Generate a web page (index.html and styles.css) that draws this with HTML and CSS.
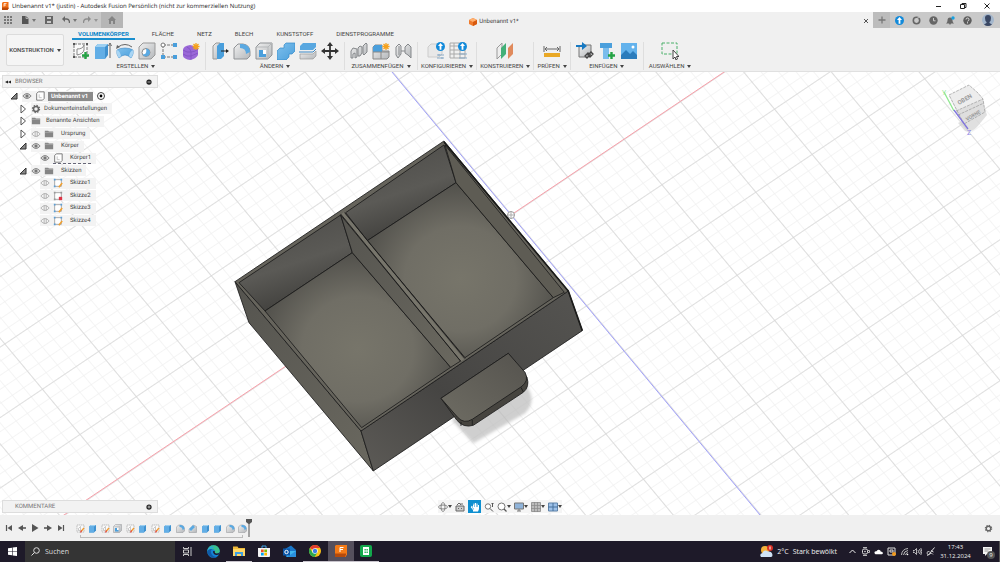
FILE: index.html
```html
<!DOCTYPE html>
<html lang="de">
<head>
<meta charset="utf-8">
<title>Unbenannt v1* - Autodesk Fusion</title>
<link rel="stylesheet" href="styles.css">
</head>
<body>
<svg class="defs" aria-hidden="true">
  <defs>
    <linearGradient id="blue" x1="0" y1="0" x2="1" y2="1"><stop offset="0" stop-color="#7fc0ec"/><stop offset="1" stop-color="#4a9fdc"/></linearGradient>
    <linearGradient id="steel" x1="0" y1="0" x2="1" y2="1"><stop offset="0" stop-color="#f0f0f0"/><stop offset="1" stop-color="#b4b7ba"/></linearGradient>
    <symbol id="box" viewBox="0 0 18 18"><path d="M2 5l4-3h10v11l-4 4H2z" fill="#3f91cf"/><path d="M2 5l4-3h10l-4 3z" fill="#9dd0f2"/><path d="M2 5h10v12H2z" fill="#62aee6"/></symbol>
    <symbol id="sketch" viewBox="0 0 18 18"><path d="M2 2h14v14H2z" fill="#fafafa" stroke="#8a8a8a" stroke-dasharray="3 1"/><path d="M5 13h4V5M5 13V9l4-4" fill="none" stroke="#999"/><path d="M16 8l-6 7" stroke="#f39c2e" stroke-width="2.6"/><path d="M11 13l-2 4" stroke="#e04040" stroke-width="2.4"/></symbol>
    <symbol id="fillet" viewBox="0 0 18 18"><path d="M1 17V6l4-4h5q7 1 7 8v4l-3 3z" fill="url(#steel)" stroke="#909396"/><path d="M7 2h3q7 1 7 8l-4 2q0-6-6-6z" fill="#5aa9e2"/></symbol>
    <symbol id="shell" viewBox="0 0 18 18"><path d="M1 5l4-4h12v12l-4 4H1z" fill="url(#steel)" stroke="#909396"/><path d="M1 5h12v12M13 5l4-4" fill="none" stroke="#b5b8ba"/><path d="M4 8h4v4h3v3H4z" fill="#4a9fdc"/><path d="M8 8h3v4H8z" fill="#fff"/></symbol>
    <symbol id="chamfer" viewBox="0 0 18 18"><path d="M2 17v-6l9-9 6 3v12z" fill="url(#steel)" stroke="#909396"/><path d="M2 10l8-8 4 4-8 8z" fill="#5aa9e2"/></symbol>
    <symbol id="eye" viewBox="0 0 12 10"><path d="M1 5q5-6 10 0-5 6-10 0z" fill="#d4d4d4" stroke="#888" stroke-width="1.2"/><circle cx="6" cy="5" r="1.9" fill="#777"/></symbol>
    <symbol id="eye-off" viewBox="0 0 12 10"><path d="M1 5q5-6 10 0-5 6-10 0zM5 2v6M7.500 2v6" fill="none" stroke="#aaa"/></symbol>
    <symbol id="folder" viewBox="0 0 12 10"><path d="M1 1h4l1 1h5v7H1z" fill="#858585"/><path d="M1 3h10" stroke="#b5b5b5" stroke-width=".8"/></symbol>
    <symbol id="closed" viewBox="0 0 10 10"><path d="M3 1l4.500 4L3 9z" fill="#fff" stroke="#555" stroke-width="1"/></symbol>
    <symbol id="open" viewBox="0 0 10 10"><path d="M2 8h6V2z" fill="#888" stroke="#333"/></symbol>
    <symbol id="body" viewBox="0 0 12 12"><path d="M2 3l2-2h7v8l-2 2H2z" fill="#fff" stroke="#666"/><path d="M5 4v4h3" fill="none" stroke="#bbb"/></symbol>
    <symbol id="sk" viewBox="0 0 12 12"><path d="M2 2h8v8H2z" fill="#fff" stroke="#999"/><path d="M1 1h2v2H1zM9 1h2v2H9zM1 9h2v2H1z" fill="#5a9fd8"/><path d="M11 6l-4 5" stroke="#f0a030" stroke-width="1.800"/></symbol>
    <symbol id="sk-lock" viewBox="0 0 12 12"><path d="M2 2h8v8H2z" fill="#fff" stroke="#999"/><path d="M1 1h2v2H1zM9 1h2v2H9zM1 9h2v2H1z" fill="#999"/><path d="M7 7h4v4H7z" fill="#dc3545"/></symbol>
    <symbol id="gear" viewBox="0 0 12 12"><circle cx="6" cy="6" r="3" fill="none" stroke="#666" stroke-width="1.800"/><circle cx="6" cy="6" r="4.300" fill="none" stroke="#666" stroke-width="1.400" stroke-dasharray="1.690 1.690"/></symbol>
    <symbol id="bolt" viewBox="0 0 10 10"><circle cx="5" cy="5" r="5" fill="#128ada"/><path d="M5 1L2.200 4.500H4V8.500h2v-4h1.800z" fill="#fff"/></symbol>
    <symbol id="min" viewBox="0 0 8 8"><circle cx="4" cy="4" r="3.500" fill="#222"/><path d="M2 4h4" stroke="#ddd"/></symbol>
    <symbol id="plus" viewBox="0 0 8 8"><circle cx="4" cy="4" r="3.500" fill="#222"/><path d="M2 4h4M4 2v4" stroke="#ddd"/></symbol>
    <symbol id="back" viewBox="0 0 8 8"><path d="M4 2v4L0 4zM8 2v4L4 4z" fill="#222"/></symbol>
  </defs>
</svg>

<header class="titlebar">
  <svg class="i8" viewBox="0 0 16 16"><path d="M2 2l2-2h11v13l-2 3H2z" fill="#f26f16"/><path d="M2 11h13v2l-2 3H2z" fill="#b94708"/><path d="M6 9V3h5M6 6h4" fill="none" stroke="#fff" stroke-width="1.500"/></svg>
  <span class="grow">Unbenannt v1* (justin) - Autodesk Fusion Persönlich (nicht zur kommerziellen Nutzung)</span>
  <button aria-label="Minimieren"><svg class="i8" viewBox="0 0 8 8"><path d="M1 4.500h5" stroke="#222"/></svg></button>
  <button aria-label="Wiederherstellen"><svg class="i8" viewBox="0 0 8 8"><path d="M1.500 2.500h4v4h-4zM3 2.500v-1h4v4H6" fill="none" stroke="#222"/></svg></button>
  <button aria-label="Schließen"><svg class="i8" viewBox="0 0 8 8"><path d="M1.500 1.500l5 5M6.500 1.500l-5 5" stroke="#222"/></svg></button>
</header>

<div class="docbar">
  <div class="quick">
    <button aria-label="Datenbereich"><svg class="i8" viewBox="0 0 8 8"><path d="M0 0h2v2H0zM3 0h2v2H3zM6 0h2v2H6zM0 3h2v2H0zM3 3h2v2H3zM6 3h2v2H6zM0 6h2v2H0zM3 6h2v2H3zM6 6h2v2H6z" fill="#777"/></svg></button>
    <button class="dd" aria-label="Datei"><svg class="i8" viewBox="0 0 8 8"><path d="M1 0h4l2.500 2.500V8H1z" fill="#555"/><path d="M5 0v2.500h2.500" fill="none" stroke="#ccc" stroke-width=".7"/></svg></button>
    <button aria-label="Speichern"><svg class="i8" viewBox="0 0 8 8"><path d="M0 0h8v8H0z" fill="#666"/><path d="M2 1h4v2H2zM2 5h4v2H2z" fill="#c9c9c9"/></svg></button>
    <button class="dd" aria-label="Rückgängig"><svg class="i8" viewBox="0 0 8 8"><path d="M1 3h3.500q3 0 3 4" fill="none" stroke="#666" stroke-width="1.300"/><path d="M0 3l3-3v6z" fill="#666"/></svg></button>
    <button class="dd faint" aria-label="Wiederholen"><svg class="i8" viewBox="0 0 8 8"><path d="M7 3H3.500q-3 0-3 4" fill="none" stroke="#666" stroke-width="1.300"/><path d="M8 3L5 0v6z" fill="#666"/></svg></button>
  </div>
  <button class="home" aria-label="Startseite"><svg class="i8" viewBox="0 0 8 8"><path d="M0 4l4-4 4 4H7v4H5V5H3v3H1V4z" fill="#848484"/></svg></button>
  <div class="doctab"><svg class="i8" viewBox="0 0 8 8"><path d="M4 0l4 2v4L4 8 0 6V2z" fill="#f07b2c"/><path d="M4 0l4 2-4 2-4-2z" fill="#ffb070"/><path d="M4 4l4-2v4L4 8z" fill="#d8590e"/></svg><span>Unbenannt v1*</span></div>
  <button class="closetab" aria-label="Tab schließen"><svg class="i8" viewBox="0 0 8 8"><path d="M2 2l4 4M6 2L2 6" stroke="#555"/></svg></button>
  <div class="account">
    <button class="newtab" aria-label="Neuer Tab"><svg class="i8" viewBox="0 0 8 8"><path d="M4 .5v7M.5 4h7" stroke="#777" stroke-width="1.300"/></svg></button>
    <button aria-label="Erweiterungen"><svg class="i9"><use href="#bolt"/></svg></button>
    <button aria-label="Aktualisieren"><svg class="i9" viewBox="0 0 9 9"><circle cx="4.500" cy="4.500" r="3.200" fill="none" stroke="#666" stroke-width="1.600"/><path d="M4.500 4.500V2.500L8 1" stroke="#ccc" stroke-width=".8" fill="none"/></svg></button>
    <button aria-label="Auftragsstatus"><svg class="i9" viewBox="0 0 9 9"><circle cx="4.500" cy="4.500" r="4.200" fill="#666"/><path d="M4.500 2v2.800h2" stroke="#ccc" fill="none"/></svg></button>
    <button aria-label="Benachrichtigungen"><svg class="i9" viewBox="0 0 9 9"><path d="M0 7.500q1.500-1 1.500-3 0-3 2.500-3t2.500 3q0 2 1.500 3H5L4 9 3 7.500z" fill="#666"/><circle cx="7" cy="2" r="1.700" fill="#16a0e0"/></svg></button>
    <button aria-label="Hilfe"><svg class="i9" viewBox="0 0 9 9"><circle cx="4.500" cy="4.500" r="4.200" fill="#5c5c5c"/><path d="M3 3.500q0-1.500 1.500-1.500T6 3.400 4.500 5.300M4.500 6.200v1.200" stroke="#ddd" fill="none"/></svg></button>
    <button class="profile" aria-label="Profil"><svg class="i12" viewBox="0 0 12 12"><circle cx="6" cy="6" r="6" fill="#a3b6cc"/><path d="M3 4q0-3 3-3t3 3-1.500 4v1l2.500 1.500Q8 12 6 12T2 10.500L4.500 9V8Q3 7 3 4z" fill="#3a4763"/></svg></button>
  </div>
</div>

<div class="ribbon">
  <button class="workspace dd">KONSTRUKTION</button>
  <div class="tools">
    <nav class="tabs">
      <button class="on">VOLUMENKÖRPER</button><button>FLÄCHE</button><button>NETZ</button><button>BLECH</button><button>KUNSTSTOFF</button><button>DIENSTPROGRAMME</button>
    </nav>
    <div class="groups">
      <section>
        <div class="icons">
          <button aria-label="Skizze erstellen"><svg viewBox="0 0 18 18"><path d="M2 2h13v13H2z" fill="#fafafa" stroke="#777" stroke-dasharray="3 1"/><path d="M5 13V7q6 0 7-4v5q-1 4-7 5z" fill="none" stroke="#888"/><path d="M1 1h2v2H1zM14 1h2v2h-2zM1 14h2v2H1z" fill="#555"/><path d="M13.500 10v7M10 13.500h7" stroke="#25a345" stroke-width="2.400"/></svg></button>
          <button aria-label="Extrusion"><svg viewBox="0 0 18 18"><path d="M1 5l3-3h10v11l-3 4H1z" fill="#3f91cf"/><path d="M1 5l3-3h10l-3 3z" fill="#9dd0f2"/><path d="M1 5h10v12H1z" fill="#62aee6"/><path d="M16 16V3M14.500 4L16 1l1.500 3" fill="none" stroke="#555" stroke-width=".9"/></svg></button>
          <button aria-label="Drehen"><svg viewBox="0 0 18 18"><path d="M1 8q3-2 8-2t8 2q1 4-2 8-3-3-6-3t-6 3q-3-4-2-8z" fill="url(#blue)" stroke="#3a87c4" stroke-width=".6"/><path d="M2 5q7-5 14 0" fill="none" stroke="#666"/><path d="M0 7l1-4 3 2z" fill="#666"/><path d="M1 8q3 1 4 6l-2 2q-3-4-2-8zM17 8q-3 1-4 6l2 2q3-4 2-8z" fill="#a8d5f4"/></svg></button>
          <button aria-label="Bohrung"><svg viewBox="0 0 18 18"><path d="M1 5l4-4h12v12l-4 4H1z" fill="url(#steel)" stroke="#999"/><circle cx="8" cy="10.500" r="4" fill="#fff" stroke="#888"/><path d="M8 6.500a4 4 0 1 1-3.500 6q5 0 3.500-6z" fill="#5aa9e2"/></svg></button>
          <button aria-label="Muster"><svg viewBox="0 0 18 18"><path d="M3 3h12M3 3v12h12" fill="none" stroke="#777" stroke-dasharray="3 1"/><circle cx="3" cy="3" r="2" fill="#fff" stroke="#777"/><path d="M13 1h4v4h-4zM1 13h4v4H1zM13 13h4v4h-4z" fill="#4a9fdc"/></svg></button>
          <button aria-label="Form erstellen"><svg viewBox="0 0 18 18"><path d="M1 8q0-4 7-5 7 1 8 4v6q-2 4-8 5-6-1-7-4z" fill="#9a68d8"/><path d="M1 8q4 3 8 2 4 0 7-3M9 10v8M1 12q4 3 8 2l7-3M5 5q4 2 4 5" fill="none" stroke="#7d4fbd" stroke-width=".7"/><path d="M14 1v7M10.500 4.500h7M11.500 2l5 5M16.500 2l-5 5" stroke="#f5a11c" stroke-width="1.300"/></svg></button>
        </div>
        <button class="label dd">ERSTELLEN</button>
      </section>
      <section>
        <div class="icons">
          <button aria-label="Drücken/Ziehen"><svg viewBox="0 0 18 18"><path d="M2 4l3-3h4v13l-3 3H2z" fill="url(#steel)" stroke="#999"/><path d="M6 4l3-3h4v13l-3 3H6z" fill="#4a9fdc"/><path d="M10 9h6" stroke="#222"/><path d="M15 7l3 2-3 2z" fill="#222"/></svg></button>
          <button aria-label="Abrundung"><svg><use href="#fillet"/></svg></button>
          <button aria-label="Wandung"><svg><use href="#shell"/></svg></button>
          <button aria-label="Kombinieren"><svg viewBox="0 0 18 18"><path d="M7 3l2-2h9v8l-3 3h-3v3l-3 3H0V9l3-3h4z" fill="url(#blue)" stroke="#3489c9" stroke-width=".7"/></svg></button>
          <button aria-label="Körper trennen"><svg viewBox="0 0 18 18"><path d="M1 4l3-3h13v4l-3 3H1z" fill="#58a7e0"/><path d="M0 10h14l3-3" fill="none" stroke="#3a87c4"/><path d="M1 12h13l3-3v5l-3 3H1z" fill="url(#steel)" stroke="#999" stroke-width=".7"/></svg></button>
          <button aria-label="Verschieben"><svg viewBox="0 0 18 18"><path d="M9 3v12M3 9h12" stroke="#333" stroke-width="1.800"/><path d="M9 0l3 4H6zM9 18l3-4H6zM0 9l4-3v6zM18 9l-4-3v6z" fill="#333"/></svg></button>
        </div>
        <button class="label dd">ÄNDERN</button>
      </section>
      <section>
        <div class="icons">
          <button aria-label="Verbindung"><svg viewBox="0 0 18 18"><path d="M1 16V9l2-3 4 1v8l-2 1v-5l-2 1v4zM8 14V6l2-2 2 1v6l-2 3zM13 12V4l3-3 1 1v8l-3 3z" fill="url(#steel)" stroke="#85888b"/></svg></button>
          <button aria-label="Neue Komponente"><svg viewBox="0 0 18 18"><path d="M1 5l2-2h7v6h7v6l-2 2H1z" fill="url(#steel)" stroke="#888"/><path d="M1 5l2-2h7v7H1z" fill="#4a9fdc"/><path d="M9 10v7M1 10h16" stroke="#888"/><path d="M14 1v7M10.500 4.500h7M11.500 2l5 5M16.500 2l-5 5" stroke="#f5a11c" stroke-width="1.300"/></svg></button>
          <button aria-label="Starre Gruppe"><svg viewBox="0 0 18 18"><path d="M2 13V5l3-3 2 2v8l-3 4zM11 5l3-3 3 3v11l-3-3-3-2z" fill="url(#steel)" stroke="#85888b"/><path d="M5 4v9M7 9h4" stroke="#85888b"/></svg></button>
        </div>
        <button class="label dd">ZUSAMMENFÜGEN</button>
      </section>
      <section class="tight">
        <div class="icons">
          <button aria-label="Konfiguration"><svg viewBox="0 0 18 18"><path d="M1 5l3-3h11v10l-3 3H1z" fill="#e8e8e8" stroke="#ccc"/><path d="M10 13h7M10 16h7M12 12v2M15 15v2" stroke="#89a9c5"/><use href="#bolt" x="9" y="0" width="9" height="9"/></svg></button>
          <button aria-label="Konfigurationstabelle"><svg viewBox="0 0 18 18"><path d="M1 1h15v15H1zM1 4h15M1 8h15M1 12h15M5 1v15M11 4v12" fill="none" stroke="#aaa"/><path d="M10 12h8M10 16h8" stroke="#89a9c5"/><use href="#bolt" x="9" y="0" width="9" height="9"/></svg></button>
        </div>
        <button class="label dd">KONFIGURIEREN</button>
      </section>
      <section class="tight">
        <div class="icons"><button aria-label="Versatzebene"><svg viewBox="0 0 18 18"><path d="M1 6l5-5v11l-5 5z" fill="#eee" stroke="#999"/><path d="M5 6l5-5v11l-5 5z" fill="#43b078"/><path d="M12 6l5-5v11l-5 5z" fill="#e08a5c"/></svg></button></div>
        <button class="label dd">KONSTRUIEREN</button>
      </section>
      <section class="tight">
        <div class="icons"><button aria-label="Messen"><svg viewBox="0 0 18 18"><path d="M1 4v6M17 4v6M2 7h14M4 5L2 7l2 2M14 5l2 2-2 2" fill="none" stroke="#666"/><path d="M1 11h16v4H1z" fill="#e9a825"/></svg></button></div>
        <button class="label dd">PRÜFEN</button>
      </section>
      <section>
        <div class="icons">
          <button aria-label="Ableiten"><svg viewBox="0 0 18 18"><path d="M3 5l3-2h9v9l-3 3H3z" fill="url(#steel)" stroke="#777"/><path d="M0 4h7" stroke="#1779c2" stroke-width="2"/><path d="M6 0l5 4-5 4z" fill="#1779c2"/><path d="M9 14l3-3 2 2-3 3zM12 13l3-3 2 2-3 3z" fill="none" stroke="#444" stroke-width="1.300"/></svg></button>
          <button aria-label="Bauteil einfügen"><svg viewBox="0 0 18 18"><path d="M2 1h12v5H2z" fill="#4a9fdc"/><path d="M5 6h6v11H5z" fill="#7bbcec"/><path d="M13.500 10v7M10 13.500h7" stroke="#25a345" stroke-width="2.400"/></svg></button>
          <button aria-label="Bild"><svg viewBox="0 0 18 18"><path d="M1 1h16v16H1z" fill="#63b2ec"/><path d="M1 13l5-5 4 4 3-3 4 4v4H1z" fill="#2b7cbc"/><circle cx="13" cy="5" r="1.500" fill="#fff"/></svg></button>
        </div>
        <button class="label dd">EINFÜGEN</button>
      </section>
      <section class="last">
        <div class="icons"><button aria-label="Auswählen"><svg viewBox="0 0 18 18"><path d="M1 1h15v11H1z" fill="none" stroke="#4bb06a" stroke-dasharray="3 1.500"/><path d="M12 8v9l2-2 1 3 1.500-1-1-2.500H18z" fill="#fff" stroke="#444"/></svg></button></div>
        <button class="label dd">AUSWÄHLEN</button>
      </section>
    </div>
  </div>
</div>

<main class="viewport">
  <svg class="scene" viewBox="0 72 1000 443" preserveAspectRatio="xMidYMid slice" role="img" aria-label="3D-Ansicht">
    <defs>
      <pattern id="minor" width="20" height="20" patternUnits="userSpaceOnUse" patternTransform="matrix(.563 -.378 .376 .4525 511 215)"><path d="M0 .5H20M.5 0V20" stroke="#f1f1f1" stroke-width="1.400"/></pattern>
      <pattern id="major" width="100" height="100" patternUnits="userSpaceOnUse" patternTransform="matrix(.563 -.378 .376 .4525 511 215)"><path d="M0 .5H100M.5 0V100" stroke="#d6d6d6" stroke-width="1.400"/></pattern>
      <radialGradient id="floor" cx=".5" cy=".55" r=".6"><stop offset="0" stop-color="#77756a"/><stop offset=".5" stop-color="#706e65"/><stop offset="1" stop-color="#4b4a46"/></radialGradient>
      <linearGradient id="wall" x1="0" y1="0" x2=".4" y2="1"><stop offset="0" stop-color="#4a4946"/><stop offset=".6" stop-color="#5b5a56"/><stop offset="1" stop-color="#403f3c"/></linearGradient>
      <linearGradient id="front" x1="0" y1="1" x2="1" y2="0"><stop offset="0" stop-color="#5d5b57"/><stop offset=".4" stop-color="#464543"/><stop offset="1" stop-color="#555451"/></linearGradient>
      <linearGradient id="side" x1="0" y1="0" x2="1" y2="1"><stop offset="0" stop-color="#55544f"/><stop offset="1" stop-color="#6a685f"/></linearGradient>
      <linearGradient id="grip" x1="0" y1="1" x2="1" y2="0"><stop offset="0" stop-color="#6e6c63"/><stop offset="1" stop-color="#55534e"/></linearGradient>
      <filter id="soft"><feGaussianBlur stdDeviation="5"/></filter>
    </defs>
    <rect y="72" width="1000" height="443" fill="#fff"/>
    <rect y="72" width="1000" height="443" fill="url(#minor)"/>
    <rect y="72" width="1000" height="443" fill="url(#major)"/>
    <path d="M511 215L736 64M511 215L61 517" stroke="#f9a0aa"/>
    <path d="M511 215L387 66M511 215L765 521" stroke="#a0a0fb"/>
    <circle cx="511" cy="215" r="3.500" fill="#fff" stroke="#999"/><path d="M511 211v8M507 215h8" stroke="#aaa"/>
    <g transform="translate(225 130) scale(.3333)" stroke-linejoin="round" stroke="#1b1b1a" stroke-width="2.500">
      <path d="M680 870L745 940 900 850Q930 820 915 785L880 720z" fill="#bbb" opacity=".7" stroke="none" filter="url(#soft)"/>
      <path d="M30 455L408 903 445 1023 72 578z" fill="url(#side)"/>
      <path d="M408 903L1030 483 1072 602 445 1023z" fill="url(#front)"/>
      <path d="M30 455L657 33 1030 483 408 903z" fill="#66645c"/>
      <path d="M42 458L347 255 382 368 120 543z" fill="url(#wall)"/>
      <path d="M120 543L382 368 677 712 410 893z" fill="url(#floor)"/>
      <path d="M347 255L382 368 677 712 707 693z" fill="url(#side)"/>
      <path d="M362 248L657 45 693 158 427 332z" fill="url(#wall)"/>
      <path d="M427 332L693 158 985 503 720 683z" fill="url(#floor)"/>
      <path d="M660 45L693 158 985 503 1018 487z" fill="#5e5c54"/>
      <path d="M352 250L713 691" stroke="#77756b" stroke-width="10"/>
      <path d="M347 252L707 694M359 248L720 686" fill="none"/>
      <path d="M657 36L1030 483 1072 602" fill="none" stroke-width="5"/>
      <path d="M648 805L695 870Q715 895 745 886L895 787Q915 770 906 742L850 670z" fill="#46443f"/>
      <path d="M648 805L850 670 900 727Q914 753 888 771L742 868Q717 883 698 862z" fill="url(#grip)"/>
      <path d="M708 876v12M742 870v15M888 772l7 14" fill="none"/>
    </g>
    <g>
      <path d="M958 123l7 8q6 2 12-4l10-12-2-6z" fill="#ccc" opacity=".6"/>
      <path d="M949 95L969 85 978 93 983 99 956 111z" fill="#ededed"/>
      <path d="M956 111L983 99 985 112 964 124z" fill="#dedede"/>
      <path d="M949 95L969 85 978 93 983 99 985 112 964 124 949 95M956 111L983 99M958 115L984 103" fill="none" stroke="#999" stroke-width=".7" stroke-dasharray="3 1"/>
      <path d="M944 92l10 19" stroke="#8fe88f" stroke-width="1.300"/><path d="M954 110l14 19" stroke="#7f74dd" stroke-width="1.300"/>
      <text class="cube" transform="translate(959 105) rotate(-30)">OBEN</text>
      <text class="cube small" transform="translate(967 121) rotate(-30)">VORNE</text>
      <text class="axis y" x="942" y="95">Y</text><text class="axis z" x="967" y="135">Z</text>
    </g>
  </svg>

  <aside class="browser">
    <h2 class="panel"><svg class="i6"><use href="#back"/></svg><span class="grow">BROWSER</span><svg class="i6"><use href="#min"/></svg></h2>
    <ul class="tree">
      <li class="root"><svg><use href="#open"/></svg><span class="row"><svg><use href="#eye"/></svg><svg><use href="#body"/></svg><b>Unbenannt v1</b></span><svg viewBox="0 0 10 10"><circle cx="5" cy="5" r="3.500" fill="#fff" stroke="#444"/><circle cx="5" cy="5" r="1.400"/></svg></li>
      <li><svg><use href="#closed"/></svg><span class="row"><svg><use href="#gear"/></svg>Dokumenteinstellungen</span></li>
      <li><svg><use href="#closed"/></svg><span class="row"><svg><use href="#folder"/></svg><span class="view">Benannte Ansichten</span></span></li>
      <li><svg><use href="#closed"/></svg><span class="row"><svg><use href="#eye-off"/></svg><svg><use href="#folder"/></svg><span class="name">Ursprung</span></span></li>
      <li><svg><use href="#open"/></svg><span class="row"><svg><use href="#eye"/></svg><svg><use href="#folder"/></svg><span class="name">Körper</span></span></li>
      <li class="leaf"><span class="row"><svg><use href="#eye"/></svg><span class="picked"><svg><use href="#body"/></svg><span class="name">Körper1</span></span></span></li>
      <li><svg><use href="#open"/></svg><span class="row"><svg><use href="#eye"/></svg><svg><use href="#folder"/></svg><span class="name">Skizzen</span></span></li>
      <li class="leaf"><span class="row"><svg><use href="#eye-off"/></svg><svg><use href="#sk"/></svg><span class="name">Skizze1</span></span></li>
      <li class="leaf"><span class="row"><svg><use href="#eye-off"/></svg><svg><use href="#sk-lock"/></svg><span class="name">Skizze2</span></span></li>
      <li class="leaf"><span class="row"><svg><use href="#eye-off"/></svg><svg><use href="#sk"/></svg><span class="name">Skizze3</span></span></li>
      <li class="leaf"><span class="row"><svg><use href="#eye-off"/></svg><svg><use href="#sk"/></svg><span class="name">Skizze4</span></span></li>
    </ul>
  </aside>

  <aside class="comments"><h2 class="panel"><span class="grow">KOMMENTARE</span><svg class="i6"><use href="#plus"/></svg></h2></aside>

  <div class="navbar">
    <button class="dd" aria-label="Orbit"><svg viewBox="0 0 10 10"><ellipse cx="5" cy="5" rx="4.500" ry="2" fill="none" stroke="#888"/><ellipse cx="5" cy="5" rx="2" ry="4.500" fill="none" stroke="#888"/></svg></button>
    <button aria-label="Ansehen"><svg viewBox="0 0 10 10"><path d="M1 4h8v5H1z" fill="#ccc" stroke="#666"/><path d="M2 3l2-2 2 2M5 2h3M3 6.500h1M6 6.500h1" stroke="#666" fill="none"/></svg></button>
    <button class="active" aria-label="Pan"><svg viewBox="0 0 10 10"><path d="M3.500 9.500V8L1 5l.8-.6L3.500 6V2.800M4 6V1.500M5.500 5V1M7 5V1.500M8.500 6V3" fill="none" stroke="#fff"/><path d="M3.500 5h5.500v2L8 9.500H3.800z" fill="#fff"/></svg></button>
    <button aria-label="Zoom"><svg viewBox="0 0 10 10"><circle cx="4" cy="4.500" r="2.700" fill="#fff" stroke="#777"/><path d="M6 6.500l3 3M8.500 1v4M7.500 2l1-1 1 1" stroke="#555" fill="none"/></svg></button>
    <button class="dd" aria-label="Einpassen"><svg viewBox="0 0 10 10"><circle cx="4.500" cy="4.500" r="3.500" fill="#fff" stroke="#777"/><path d="M7 7l2.500 2.500" stroke="#555" stroke-width="1.300"/></svg></button>
    <button class="dd" aria-label="Anzeige"><svg viewBox="0 0 10 10"><path d="M.5 1h9v6h-9z" fill="#8fb3d9" stroke="#777"/><path d="M3 9h4M5 7v2" stroke="#777"/></svg></button>
    <button class="dd" aria-label="Raster"><svg viewBox="0 0 10 10"><path d="M.5.5h9v9h-9z" fill="#bbb" stroke="#999"/><path d="M3.500 0v10M6.500 0v10M0 3.500h10M0 6.500h10" stroke="#888" stroke-width=".7"/></svg></button>
    <button class="dd" aria-label="Ansichtsfenster"><svg viewBox="0 0 10 10"><path d="M.5 1h9v8h-9z" fill="#9cc0e8" stroke="#5f82a8"/><path d="M5 1v8M0 5h10" stroke="#47709c"/></svg></button>
  </div>
</main>

<div class="timeline">
  <div class="play">
    <button aria-label="Zum Anfang"><svg viewBox="0 0 8 8"><path d="M1.500 1v6" stroke="#555" stroke-width="1.200"/><path d="M7 1v6L2.500 4z" fill="#555"/></svg></button>
    <button aria-label="Zurück"><svg viewBox="0 0 8 8"><path d="M5 1v6L0 4z" fill="#555"/><path d="M5 4h3" stroke="#777" stroke-width="2"/></svg></button>
    <button aria-label="Wiedergabe"><svg viewBox="0 0 8 8"><path d="M1 0l6.500 4L1 8z" fill="#555"/></svg></button>
    <button aria-label="Vor"><svg viewBox="0 0 8 8"><path d="M3 1v6l5-3z" fill="#555"/><path d="M0 4h3" stroke="#777" stroke-width="2"/></svg></button>
    <button aria-label="Zum Ende"><svg viewBox="0 0 8 8"><path d="M6.500 1v6" stroke="#555" stroke-width="1.200"/><path d="M1 1v6l4.500-3z" fill="#555"/></svg></button>
  </div>
  <div class="features">
    <button aria-label="Skizze1"><svg><use href="#sketch"/></svg></button>
    <button aria-label="Extrusion1"><svg><use href="#box"/></svg></button>
    <button aria-label="Skizze2"><svg><use href="#sketch"/></svg></button>
    <button aria-label="Wandung1"><svg><use href="#shell"/></svg></button>
    <button aria-label="Skizze3"><svg><use href="#sketch"/></svg></button>
    <button aria-label="Extrusion2"><svg><use href="#box"/></svg></button>
    <button aria-label="Skizze4"><svg><use href="#sketch"/></svg></button>
    <button aria-label="Extrusion3"><svg><use href="#box"/></svg></button>
    <button aria-label="Abrundung1"><svg><use href="#fillet"/></svg></button>
    <button aria-label="Fase1"><svg><use href="#chamfer"/></svg></button>
    <button aria-label="Extrusion4"><svg><use href="#box"/></svg></button>
    <button aria-label="Extrusion5"><svg><use href="#box"/></svg></button>
    <button aria-label="Abrundung2"><svg><use href="#fillet"/></svg></button>
    <button aria-label="Abrundung3"><svg><use href="#fillet"/></svg></button>
  </div>
  <svg class="marker" viewBox="0 0 6 18"><path d="M0 0h6v3L3.500 5v13h-1V5L0 3z" fill="#555"/></svg>
  <button class="settings" aria-label="Einstellungen"><svg class="i9"><use href="#gear"/></svg></button>
</div>

<footer class="taskbar">
  <button class="start" aria-label="Start"><svg class="i9" viewBox="0 0 9 9"><path d="M0 1.300L4 .7v3.500H0zM4.600.6L9 0v4.200H4.600zM0 4.800h4v3.500l-4-.6zM4.600 4.800H9V9l-4.400-.6z" fill="#fff"/></svg></button>
  <label class="search"><svg class="i9" viewBox="0 0 9 9"><circle cx="5.500" cy="3.500" r="2.800" fill="none" stroke="#ddd"/><path d="M3.500 5.500L.5 8.500" stroke="#ddd"/></svg><input type="text" placeholder="Suchen" aria-label="Suchen"></label>
  <div class="apps">
    <button aria-label="Aktive Anwendungen"><svg class="i9" viewBox="0 0 9 9"><path d="M.5 0v1.500h5V0M.5 9V7.500h5V9M.5 3h5v3h-5zM8 0v2M8 4v5M7 3h2" fill="none" stroke="#ddd" stroke-width=".9"/></svg></button>
    <button aria-label="Edge"><svg class="i13" viewBox="0 0 13 13"><circle cx="6.500" cy="6.500" r="6.300" fill="#1582d4"/><path d="M.3 6Q1 .2 6.500.2T12.800 6Q12.500 8.500 9 8.500 7 8 8 6.500 8 4 5 4 2 4 .3 6z" fill="#3ac08c"/><path d="M.3 6Q1 2 5 1.500L8 3Q4 2.500 .3 6z" fill="#2aa8d8"/><path d="M.3 6Q2 3.500 5 4 3 6 4.500 9T10 12Q6 14 2.500 11 .2 9 .3 6z" fill="#0f5ba8"/><path d="M8 6.500Q7 8 9 8.500 12 8.800 12.600 7L12 9.500Q7 11 6 7q0-1.500 2-.5z" fill="#1e1a29"/></svg></button>
    <button class="run" aria-label="Explorer"><svg class="i12" viewBox="0 0 12 12"><path d="M0 1.500h4.500l1 1.500H12v8H0z" fill="#f0b93a"/><path d="M0 4h12v7H0z" fill="#ffd766"/><path d="M2 7h8v4H8V9H4v2H2z" fill="#3f9fe0"/></svg></button>
    <button aria-label="Store"><svg class="i12" viewBox="0 0 12 12"><path d="M4 3V1h4v2" fill="none" stroke="#3ea2e5"/><path d="M0 3h12v8q0 1-1 1H1q-1 0-1-1z" fill="#f4f4f4"/><path d="M3 4.500h2.700v2.700H3z" fill="#f25022"/><path d="M6.300 4.500H9v2.700H6.300z" fill="#7fba00"/><path d="M3 7.800h2.700v2.700H3z" fill="#00a4ef"/><path d="M6.300 7.800H9v2.700H6.300z" fill="#ffb900"/></svg></button>
    <button aria-label="Outlook"><svg class="i13" viewBox="0 0 13 13"><path d="M2 4l6-3.500L13 5v7H3z" fill="#1976c8"/><path d="M4 6h9v6H4z" fill="#41b5ee"/><path d="M4 12l9-6v6z" fill="#2a8fdd"/><path d="M0 3.500h7v7H0z" fill="#0b56a8"/><circle cx="3.500" cy="7" r="1.700" fill="none" stroke="#fff"/></svg></button>
    <button class="run" aria-label="Chrome"><svg class="i12" viewBox="0 0 12 12"><circle cx="6" cy="6" r="6" fill="#fbc116"/><path d="M6 6L.8 3A6 6 0 0 1 11.200 3H6z" fill="#e33b2e"/><path d="M.8 3A6 6 0 0 0 5.500 12L8.500 7.500 6 6 3.500 7.500z" fill="#2da94f"/><circle cx="6" cy="6" r="2.800" fill="#fff"/><circle cx="6" cy="6" r="2.200" fill="#3c7de6"/></svg></button>
    <button class="run current" aria-label="Fusion"><svg class="i12" viewBox="0 0 12 12"><path d="M0 1l1-1h11v9.500L10.500 12H0z" fill="#f47a16"/><path d="M0 8.500h11v1L10 12H0z" fill="#b54a0b"/><path d="M5 7V2.500h3.500M5 4.500h3" fill="none" stroke="#fff"/></svg></button>
    <button class="run" aria-label="Tabellen"><svg class="i12" viewBox="0 0 12 12"><rect width="12" height="12" rx="2" fill="#12a84c"/><path d="M3 2h6v8H3z" fill="#fff"/><path d="M4.500 4h1.300v1.500H4.500zM6.500 4h1.300v1.500H6.500zM4.500 6.500h1.300V8H4.500zM6.500 6.500h1.300V8H6.500z" fill="#12a84c"/></svg></button>
  </div>
  <div class="tray">
    <button class="weather"><svg class="i13" viewBox="0 0 13 13"><circle cx="5" cy="5" r="4" fill="#f5b23a"/><path d="M1 12q-2-3 1.500-4Q4 4 8 6.500 12 6 12.500 10q0 2-1.500 2z" fill="#cfe2f7"/><circle cx="10" cy="3" r="3" fill="#d93025"/><path d="M10 1.500v3" stroke="#fff"/></svg><span>2°C</span><span>Stark bewölkt</span></button>
    <button aria-label="Ausgeblendete Symbole"><svg class="i9" viewBox="0 0 9 9"><path d="M1.500 6l3-3 3 3" fill="none" stroke="#eee"/></svg></button>
    <button aria-label="Kamera"><svg class="i9" viewBox="0 0 9 9"><rect x="1.500" y="2" width="5" height="5" rx="1.500" fill="none" stroke="#ddd"/><circle cx="4" cy="4.500" r=".8" fill="#ddd"/><path d="M2 .5h4M2 8.500h4M7 3.500h1.500v2H7" stroke="#ddd" stroke-width=".8" fill="none"/></svg></button>
    <button aria-label="OneDrive"><svg class="i9" viewBox="0 0 9 9"><path d="M1.500 7.300Q-.3 6 1 4.600q.5-.6 1.500-.4Q3.500 2 5.500 3q1 .3 1.200 1.400Q9 4.500 8.900 6q0 1.200-1.200 1.300z" fill="#fff"/></svg></button>
    <button aria-label="Update"><svg class="i9" viewBox="0 0 9 9"><path d="M1 1h7v7H1zM3 3h3v2H3z" fill="none" stroke="#ddd"/><circle cx="7" cy="7" r="2" fill="#f39a1e"/></svg></button>
    <button aria-label="WLAN"><svg class="i9" viewBox="0 0 9 9"><path d="M1.500 8Q2 2 8 1.500M3.500 8Q4 4 8 3.500M5.500 8q.5-2 2.500-2.500" fill="none" stroke="#bbb"/><circle cx="7.500" cy="7.500" r=".8" fill="#fff"/></svg></button>
    <button aria-label="Lautstärke"><svg class="i9" viewBox="0 0 9 9"><path d="M0 3.500h1.500L3.500 1.500v6L1.500 5.500H0z" fill="none" stroke="#ddd" stroke-width=".8"/><path d="M5 3q1 1.500 0 3M6.500 2q1.700 2.500 0 5M7.800 1q2 3.500 0 7" fill="none" stroke="#ddd" stroke-width=".8"/></svg></button>
    <button aria-label="Stift"><svg class="i9" viewBox="0 0 9 9"><path d="M8.500.5L4 6M5 3.500L7.500 5" fill="none" stroke="#ddd"/><path d="M3.500 4.500Q1 4 1 6t2 1.500T4 5.500M1 8.500q2 0 2.500-2 3-1 3.500 1" fill="none" stroke="#ddd" stroke-width=".8"/></svg></button>
    <button class="clock"><span>17:43</span><span>31.12.2024</span></button>
    <button class="notes" aria-label="9 Benachrichtigungen"><svg class="i12" viewBox="0 0 12 12"><path d="M1 1h9v7H5L3 10V8H1z" fill="#f4f4f4"/><path d="M2.500 3h6M2.500 5h4" stroke="#888" stroke-width=".8"/></svg><span class="badge">9</span></button>
  </div>
</footer>
</body>
</html>
```

FILE: styles.css
```css
* { box-sizing: border-box; }
html, body { height: 100%; margin: 0; }
body {
  display: flex;
  flex-direction: column;
  overflow: hidden;
  background: #f0f0f0;
  color: #444;
  font: 6px/8px Roboto, "Liberation Sans", sans-serif;
  text-rendering: geometricPrecision;
}
button {
  display: flex;
  align-items: center;
  justify-content: center;
  margin: 0;
  padding: 0;
  border: 0;
  background: none;
  color: inherit;
  font: inherit;
}
svg { display: block; flex: none; }
.defs { position: absolute; width: 0; height: 0; }
.grow { flex: 1; }
.i6 { width: 6px; height: 6px; }
.i8 { width: 8px; height: 8px; }
.i9 { width: 9px; height: 9px; }
.i12 { width: 12px; height: 12px; }
.i13 { width: 13px; height: 13px; }

/* drop-down arrow */
.dd::after {
  content: "";
  margin-left: 3px;
  border: 2px solid transparent;
  border-top: 3px solid #444;
  border-bottom: 0;
}

.titlebar {
  display: flex;
  align-items: center;
  flex: none;
  height: 12px;
  padding: 0 9px 0 1px;
  gap: 3px;
  background: #fff;
  color: #222;
  font-family: "Open Sans", sans-serif;
}
.titlebar button { width: 8px; margin-left: 13px; }

.docbar { display: flex; flex: none; height: 16px; }
.quick {
  display: flex;
  align-items: center;
  gap: 9px;
  padding: 0 3px 0 4px;
  background: #c9c9c9;
}
.quick .dd::after { border-top-color: #777; }
.faint { margin-left: -3px; opacity: .6; }
.home { width: 22px; background: #b6b6b6; }
.doctab { display: flex; flex: 1; align-items: center; justify-content: center; gap: 2px; padding: 3px 0 0 6px; }
.closetab { width: 14px; padding-top: 2px; }
.account { display: flex; align-items: center; gap: 8px; padding-right: 6px; background: #c9c9c9; }
.newtab { width: 17px; height: 16px; margin-right: -3px; background: #bcbcbc; }
.profile { margin-left: 2px; }

.ribbon {
  display: flex;
  flex: none;
  height: 44px;
  border-bottom: 1px solid #e0e0e0;
  background: #f0f0f0;
}
.workspace {
  width: 58px;
  height: 32px;
  margin: 6px 3px 0 6px;
  border: 1px solid #dcdcdc;
  border-radius: 2px;
  background: #f5f5f5;
  font-weight: 500;
}
.tabs { display: flex; gap: 11px; height: 12px; padding-left: 5px; }
.tabs button { padding: 2px 6px 0; border-bottom: 2px solid transparent; }
.tabs .on { border-color: #1a8fce; color: #0d86c9; font-weight: 700; }
.groups { display: flex; }
.groups section {
  display: flex;
  flex-direction: column;
  align-items: center;
  gap: 2px;
  margin-top: 2px;
  padding: 0 5px;
  border-right: 1px solid #dedede;
}
.groups .tight { padding: 0 3px; }
.groups .last { border: 0; }
.icons { display: flex; gap: 4px; }
.icons svg { width: 18px; height: 18px; }

.viewport { position: relative; flex: 1; min-height: 0; background: #fff; }
.scene { width: 100%; height: 100%; }
.cube { fill: #999; font-size: 6px; font-weight: 700; }
.small { font-size: 5px; }
.axis { font-size: 7px; }
.y { fill: #9be89b; }
.z { fill: #8d84e8; }

.browser, .comments { position: absolute; left: 2px; width: 156px; }
.browser { top: 3px; }
.comments { bottom: 2px; }
.panel {
  display: flex;
  align-items: center;
  gap: 4px;
  height: 13px;
  margin: 0;
  padding: 0 5px 0 2px;
  border: 1px solid #ddd;
  background: #f2f2f2;
  color: #777;
  font-size: 6px;
  font-weight: 400;
}
.comments .panel { padding-left: 12px; }
.tree {
  display: grid;
  height: 137px;
  margin: 2px 0 0;
  padding: 0;
  list-style: none;
  font-size: 6px;
}
.tree li { display: flex; align-items: center; gap: 3px; padding-left: 16px; }
.tree li.root { padding-left: 7px; }
.tree li.leaf { padding-left: 38px; }
.tree svg { width: 10px; height: 10px; }
.row { display: flex; align-items: center; gap: 3px; height: 11px; padding-right: 5px; background: #f3f3f3; }
.view { padding-left: 2px; }
.name { padding-left: 4px; }
.root .row { padding: 0; }
.root b { padding: 0 5px 0 3px; background: #8a8a8a; color: #fff; line-height: 9px; }
.picked { display: flex; align-items: center; gap: 3px; border-bottom: 1px dashed #667; }

.navbar {
  position: absolute;
  right: 44%;
  bottom: 2px;
  display: flex;
  align-items: center;
  gap: 3px;
  height: 13px;
  margin-right: -2px;
  background: #f5f5f5;
}
.navbar svg { width: 10px; height: 10px; }
.navbar .dd::after { margin-left: 0; }
.navbar .active { width: 13px; height: 13px; background: #0e8fd0; }

.timeline {
  display: flex;
  align-items: center;
  flex: none;
  height: 26px;
  padding: 0 7px 0 5px;
  background: #f0f0f0;
}
.play { display: flex; gap: 5px; width: 69px; }
.play svg { width: 8px; height: 8px; }
.features { display: grid; grid-template-columns: repeat(14, 1fr); width: 175px; position: relative; }
.features svg { width: 9px; height: 9px; }
.features::after {
  content: "";
  position: absolute;
  left: 6px;
  right: 6px;
  top: 11px;
  height: 2px;
  border: 1px solid #bbb;
  border-top: 0;
}
.marker { width: 6px; height: 18px; margin-left: -3px; }
.settings { margin-left: auto; }

.taskbar {
  display: flex;
  align-items: stretch;
  flex: none;
  height: 21px;
  background: #1e1a29;
  color: #f0f0f0;
  font: 7px/9px "Open Sans", sans-serif;
}
.start { width: 25px; }
.search { display: flex; align-items: center; gap: 5px; width: 150px; padding-left: 6px; background: #343434; }
.search input { flex: 1; min-width: 0; padding: 0; border: 0; outline: 0; background: none; color: #fff; font: inherit; }
.search input::placeholder { color: #ddd; opacity: 1; }
.apps { display: flex; width: 204px; }
.apps button { flex: 1; border-bottom: 1px solid transparent; }
.apps .run { border-bottom-color: #c8c4cc; }
.apps .current { background: #55505d; }
.tray { display: flex; gap: 4px; margin-left: auto; }
.weather { gap: 4px; margin-right: 7px; }
.clock { flex-direction: column; width: 33px; font-size: 6px; line-height: 9px; }
.notes { position: relative; width: 24px; border-right: 1px solid #555; }
.badge {
  position: absolute;
  right: 4px;
  bottom: 3px;
  width: 8px;
  height: 8px;
  border-radius: 50%;
  background: #555;
  font-size: 6px;
  line-height: 8px;
}
```
